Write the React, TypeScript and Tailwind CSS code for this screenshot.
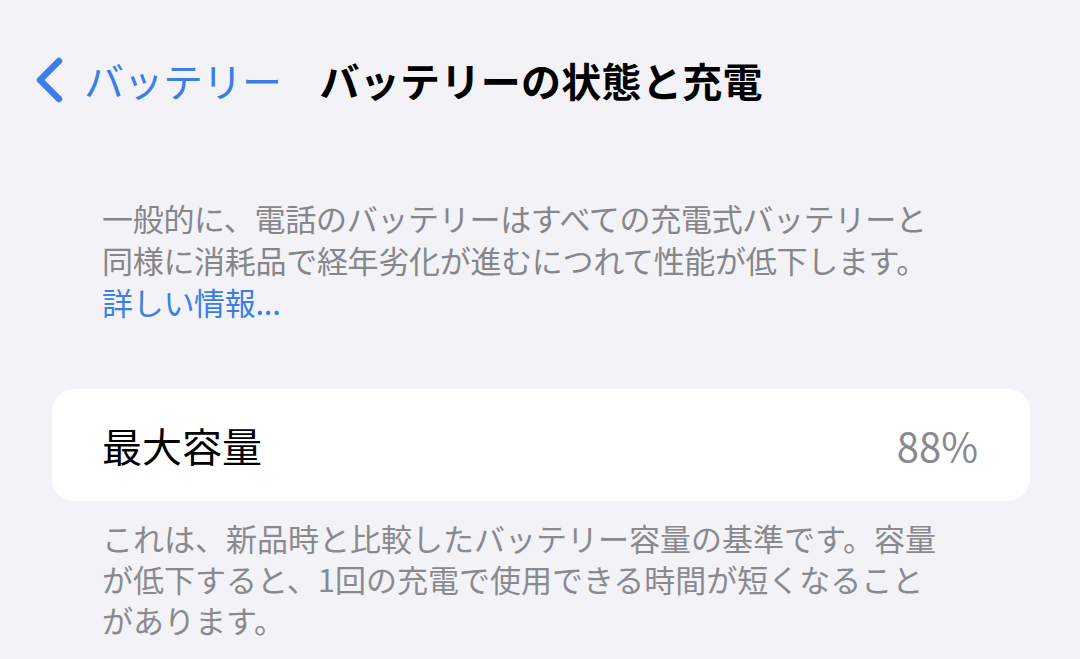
export default function App() {
  return (
    <div
      className="w-full h-[659px] overflow-hidden bg-[#f2f2f7] text-black"
      style={{ fontFamily: '"Noto Sans CJK JP", "Noto Sans", sans-serif' }}
    >
      <div className="flex items-center h-[60px] mt-[50px]">
        <svg className="ml-[33px]" width="32" height="48" viewBox="0 0 32 48" fill="none">
          <path d="M26 5 L7 24 L26 43" stroke="#3a7ee6" strokeWidth="6.5" strokeLinecap="round" strokeLinejoin="round" />
        </svg>
        <span className="ml-[19px] text-[40px] leading-none text-[#3a7ee6] tracking-[-0.5px]">バッテリー</span>
        <span className="ml-[38px] text-[40px] leading-none font-bold tracking-[0.3px]">バッテリーの状態と充電</span>
      </div>

      <p className="mt-[87px] pl-[102px] text-[31px] leading-[42px] text-[#86868b] whitespace-nowrap tracking-[-0.3px]">
        一般的に、電話のバッテリーはすべての充電式バッテリーと
        <br />
        同様に消耗品で経年劣化が進むにつれて性能が低下します。
        <br />
        <span className="text-[#3a7ee6]">詳しい情報...</span>
      </p>

      <div className="mt-[66px] ml-[52px] w-[978px] h-[112px] rounded-[22px] bg-white flex items-center justify-between pl-[50px] pr-[52px]">
        <span className="text-[40px] leading-none">最大容量</span>
        <span className="text-[40px] leading-none text-[#8a8a8e]">88%</span>
      </div>

      <p className="mt-[16px] pl-[102px] text-[31px] leading-[41px] text-[#8a8a8e] whitespace-nowrap">
        これは、新品時と比較したバッテリー容量の基準です。容量
        <br />
        が低下すると、1回の充電で使用できる時間が短くなること
        <br />
        があります。
      </p>
    </div>
  );
}
